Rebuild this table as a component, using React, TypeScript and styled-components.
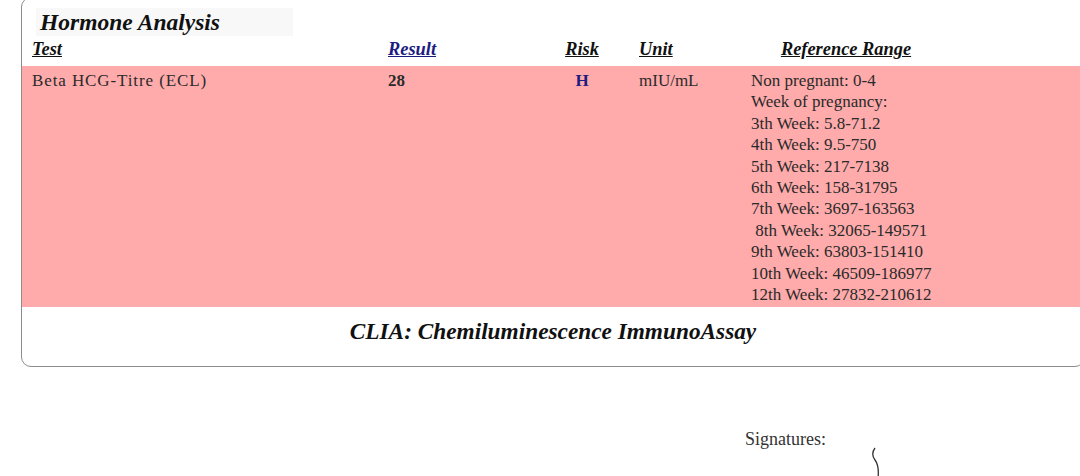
import React from "react";
import styled, { createGlobalStyle } from "styled-components";

const GlobalStyle = createGlobalStyle`
  body {
    margin: 0;
    overflow: hidden;
    background: #ffffff;
    font-family: "Liberation Serif", "Times New Roman", serif;
    color: #2a2a2a;
  }
`;

const Page = styled.div`
  padding-left: 21px;
  min-height: 476px;
`;

const Panel = styled.div`
  width: 1064px;
  margin-top: -3px;
  border: 1.5px solid #8c8c8c;
  border-radius: 10px;
  box-sizing: border-box;
  overflow: hidden;
`;

const TitleBar = styled.div`
  width: 257px;
  height: 28px;
  margin: 10px 0 0 14px;
  padding-left: 4px;
  box-sizing: border-box;
  background: #f8f8f8;
  font-size: 23.5px;
  font-weight: 700;
  font-style: italic;
  line-height: 28px;
  color: #111;
`;

const Row = styled.div<{ $pink?: boolean }>`
  display: grid;
  grid-template-columns: 356px 172px 44px 144px 196px;
  padding-left: 10px;
  background: ${(p) => (p.$pink ? "#ffabab" : "transparent")};
`;

const HeaderRow = styled(Row)`
  height: 30px;
  align-items: end;
  padding-bottom: 7px;
  box-sizing: border-box;
  line-height: 20px;
`;

const Head = styled.span<{ $align?: string; $blue?: boolean }>`
  text-align: ${(p) => (p.$align === "center" ? "center" : "left")};
  padding-left: ${(p) => (p.$align === "pad" ? "35px" : "0")};
  font-size: 18.4px;
  font-weight: 700;
  font-style: italic;
  text-decoration: underline;
  color: ${(p) => (p.$blue ? "#1c1c80" : "#111")};
`;

const DataRow = styled(Row)`
  padding-top: 4px;
  padding-bottom: 2px;
  font-size: 17px;
  line-height: 21.4px;
`;

const Cell = styled.div<{ $align?: string; $bold?: boolean; $blue?: boolean; $pad?: number; $wide?: boolean }>`
  text-align: ${(p) => p.$align || "left"};
  padding-left: ${(p) => p.$pad || 0}px;
  font-weight: ${(p) => (p.$bold ? 700 : 400)};
  letter-spacing: ${(p) => (p.$wide ? "0.9px" : "normal")};
  color: ${(p) => (p.$blue ? "#1c1c80" : "#2a2a2a")};
`;

const RangeLine = styled.div`
  white-space: pre;
`;

const Footer = styled.div`
  height: 59px;
  padding-top: 10px;
  box-sizing: border-box;
  text-align: center;
  font-size: 23.3px;
  line-height: 28px;
  font-weight: 700;
  font-style: italic;
  color: #111;
`;

const SignatureArea = styled.div`
  position: relative;
  margin-top: 62px;
  padding-left: 724px;
  height: 48px;
  font-size: 18px;
  color: #333;
`;

const Squiggle = styled.svg`
  position: absolute;
  left: 848px;
  top: 18px;
`;

const ranges = [
  "Non pregnant: 0-4",
  "Week of pregnancy:",
  "3th Week: 5.8-71.2",
  "4th Week: 9.5-750",
  "5th Week: 217-7138",
  "6th Week: 158-31795",
  "7th Week: 3697-163563",
  " 8th Week: 32065-149571",
  "9th Week: 63803-151410",
  "10th Week: 46509-186977",
  "12th Week: 27832-210612",
];

const App = () => {
  return (
    <>
      <GlobalStyle />
      <Page>
        <Panel>
          <TitleBar>Hormone Analysis</TitleBar>
          <HeaderRow>
            <Head>Test</Head>
            <Head $blue>Result</Head>
            <Head $align="center">Risk</Head>
            <Head $align="pad">Unit</Head>
            <Head $align="center">Reference Range</Head>
          </HeaderRow>
          <DataRow $pink>
            <Cell $wide>Beta HCG-Titre (ECL)</Cell>
            <Cell $bold>28</Cell>
            <Cell $align="center" $bold $blue>
              H
            </Cell>
            <Cell $pad={35}>mIU/mL</Cell>
            <Cell $pad={3}>
              {ranges.map((r, i) => (
                <RangeLine key={i}>{r}</RangeLine>
              ))}
            </Cell>
          </DataRow>
          <Footer>CLIA: Chemiluminescence ImmunoAssay</Footer>
        </Panel>
        <SignatureArea>
          Signatures:
          <Squiggle width="16" height="32" viewBox="0 0 16 32">
            <path
              d="M6 1 C3 5, 3 9, 6 13 C9 17, 10 22, 9 31"
              fill="none"
              stroke="#333"
              strokeWidth="1.3"
            />
          </Squiggle>
        </SignatureArea>
      </Page>
    </>
  );
};

export default App;
